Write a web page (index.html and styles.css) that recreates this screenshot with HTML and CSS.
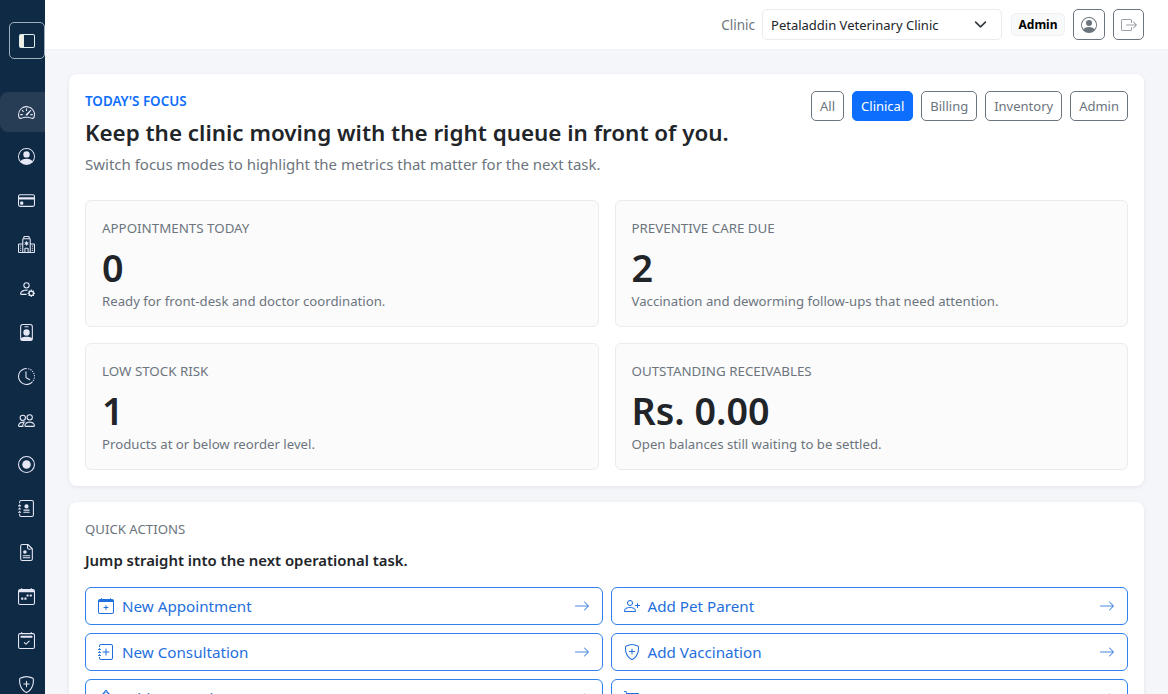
FILE: index.html
```html
<!DOCTYPE html>
<html lang="en">
<head>
<meta charset="utf-8">
<title>Dashboard</title>
<link rel="stylesheet" href="styles.css">
</head>
<body>
<div class="app">
  <aside class="sidebar">
    <button class="toggle"><svg viewBox="0 0 16 16" class="ico"><path d="M0 3a2 2 0 0 1 2-2h12a2 2 0 0 1 2 2v10a2 2 0 0 1-2 2H2a2 2 0 0 1-2-2zm5-1v12h9a1 1 0 0 0 1-1V3a1 1 0 0 0-1-1zM4 2H2a1 1 0 0 0-1 1v10a1 1 0 0 0 1 1h2z" fill-rule="evenodd"/><rect x="1" y="2" width="3" height="12" fill="#f1eee0"/></svg></button>
    <nav class="nav">
      <a class="nav-item active"><svg viewBox="0 0 16 16" class="ico"><path d="M8 4a.5.5 0 0 1 .5.5V6a.5.5 0 0 1-1 0V4.500A.5.5 0 0 1 8 4M3.732 5.732a.5.5 0 0 1 .707 0l.915.914a.5.5 0 1 1-.708.708l-.914-.915a.5.5 0 0 1 0-.707M2 10a.5.5 0 0 1 .5-.5h1.586a.5.5 0 0 1 0 1H2.500A.5.5 0 0 1 2 10m9.500 0a.5.5 0 0 1 .5-.5h1.500a.5.5 0 0 1 0 1H12a.5.5 0 0 1-.5-.5m.754-4.246a.39.39 0 0 0-.527-.02L7.547 9.310a.91.91 0 1 0 1.302 1.258l3.434-4.297a.39.39 0 0 0-.029-.518z"/><path d="M0 10a8 8 0 1 1 15.547 2.661c-.442 1.253-1.845 1.602-2.932 1.250C11.309 13.488 9.475 13 8 13c-1.474 0-3.310.488-4.615.911-1.087.352-2.490.003-2.932-1.250A8 8 0 0 1 0 10m8-7a7 7 0 0 0-6.603 9.329c.203.575.923.876 1.680.630C4.397 12.533 6.358 12 8 12s3.604.532 4.923.96c.757.245 1.477-.056 1.680-.631A7 7 0 0 0 8 3"/></svg></a>
      <a class="nav-item"><svg viewBox="0 0 16 16" class="ico"><path d="M11 6a3 3 0 1 1-6 0 3 3 0 0 1 6 0"/><path fill-rule="evenodd" d="M0 8a8 8 0 1 1 16 0A8 8 0 0 1 0 8m8-7a7 7 0 0 0-5.468 11.370C3.242 11.226 4.805 10 8 10s4.757 1.225 5.468 2.370A7 7 0 0 0 8 1"/></svg></a>
      <a class="nav-item"><svg viewBox="0 0 16 16" class="ico"><path d="M0 4a2 2 0 0 1 2-2h12a2 2 0 0 1 2 2v8a2 2 0 0 1-2 2H2a2 2 0 0 1-2-2zm2-1a1 1 0 0 0-1 1v1h14V4a1 1 0 0 0-1-1zm13 4H1v5a1 1 0 0 0 1 1h12a1 1 0 0 0 1-1z"/><path d="M2 10a1 1 0 0 1 1-1h1a1 1 0 0 1 1 1v1a1 1 0 0 1-1 1H3a1 1 0 0 1-1-1z"/></svg></a>
      <a class="nav-item"><svg viewBox="0 0 16 16" class="ico"><path d="M8.500 5.034v1.100l.953-.55.5.866L9 7l.953.55-.5.866-.953-.55v1.100h-1v-1.100l-.953.55-.5-.866L7 7l-.953-.55.5-.866.953.55v-1.100zM13.250 9a.25.25 0 0 0-.25.25v.5c0 .138.112.25.25.25h.5a.25.25 0 0 0 .25-.25v-.5a.25.25 0 0 0-.25-.25zM13 11.250a.25.25 0 0 1 .25-.25h.5a.25.25 0 0 1 .25.25v.5a.25.25 0 0 1-.25.25h-.5a.25.25 0 0 1-.25-.25zm.25 1.750a.25.25 0 0 0-.25.25v.5c0 .138.112.25.25.25h.5a.25.25 0 0 0 .25-.25v-.5a.25.25 0 0 0-.25-.25zm-11-4a.25.25 0 0 0-.25.25v.5c0 .138.112.25.25.25h.5A.25.25 0 0 0 3 9.750v-.5A.25.25 0 0 0 2.750 9zm0 2a.25.25 0 0 0-.25.25v.5c0 .138.112.25.25.25h.5a.25.25 0 0 0 .25-.25v-.5a.25.25 0 0 0-.25-.25zM2 13.250a.25.25 0 0 1 .25-.25h.5a.25.25 0 0 1 .25.25v.5a.25.25 0 0 1-.25.25h-.5a.25.25 0 0 1-.25-.25z"/><path d="M5 1a1 1 0 0 1 1-1h4a1 1 0 0 1 1 1v1a1 1 0 0 1 1 1v4h3a1 1 0 0 1 1 1v7a1 1 0 0 1-1 1H1a1 1 0 0 1-1-1V8a1 1 0 0 1 1-1h3V3a1 1 0 0 1 1-1zm2 14h2v-3H7zm3 0h1V3H5v12h1v-3a1 1 0 0 1 1-1h2a1 1 0 0 1 1 1zm0-14H6v1h4zm2 7v7h3V8zm-8 7V8H1v7z"/></svg></a>
      <a class="nav-item"><svg viewBox="0 0 16 16" class="ico"><path d="M11 5a3 3 0 1 1-6 0 3 3 0 0 1 6 0M8 7a2 2 0 1 0 0-4 2 2 0 0 0 0 4m.256 7a4.500 4.500 0 0 1-.229-1.004H3c.001-.246.154-.986.832-1.664C4.484 10.680 5.711 10 8 10q.39 0 .74.025c.226-.341.496-.65.804-.918Q8.844 9.002 8 9c-5 0-6 3-6 4s1 1 1 1z"/><path d="M11.886 9.460c.18-.613 1.048-.613 1.229 0l.043.148a.64.64 0 0 0 .921.382l.136-.074c.561-.306 1.175.308.870.869l-.075.136a.64.64 0 0 0 .382.920l.149.045c.612.180.612 1.048 0 1.229l-.150.043a.64.64 0 0 0-.38.921l.074.136c.305.561-.309 1.175-.870.870l-.136-.075a.64.64 0 0 0-.920.382l-.045.149c-.180.612-1.048.612-1.229 0l-.043-.150a.64.64 0 0 0-.921-.38l-.136.074c-.561.305-1.175-.309-.870-.870l.075-.136a.64.64 0 0 0-.382-.920l-.148-.045c-.613-.180-.613-1.048 0-1.229l.148-.043a.64.64 0 0 0 .382-.921l-.074-.136c-.306-.561.308-1.175.869-.870l.136.075a.64.64 0 0 0 .920-.382zM14 12.500a1.500 1.500 0 1 0-3 0 1.500 1.500 0 0 0 3 0"/></svg></a>
      <a class="nav-item"><svg viewBox="0 0 16 16" class="ico"><path d="M6.500 2a.5.5 0 0 0 0 1h3a.5.5 0 0 0 0-1zM11 8a3 3 0 1 1-6 0 3 3 0 0 1 6 0"/><path d="M4.500 0A2.500 2.500 0 0 0 2 2.500V14a2 2 0 0 0 2 2h8a2 2 0 0 0 2-2V2.500A2.500 2.500 0 0 0 11.500 0zM3 2.500A1.500 1.500 0 0 1 4.500 1h7A1.500 1.500 0 0 1 13 2.500v10.795a4.200 4.200 0 0 0-.776-.492C11.392 12.387 10.063 12 8 12s-3.392.387-4.224.803a4.200 4.200 0 0 0-.776.492z"/></svg></a>
      <a class="nav-item"><svg viewBox="0 0 16 16" class="ico"><path d="M8.515 1.019A7 7 0 0 0 8 1V0a8 8 0 0 1 .589.022zm2.004.450a7 7 0 0 0-.985-.299l.219-.976q.576.129 1.126.342zm1.370.710a7 7 0 0 0-.439-.270l.493-.870a8 8 0 0 1 .979.654l-.615.789a7 7 0 0 0-.418-.302zm1.834 1.790a7 7 0 0 0-.653-.796l.724-.690q.406.429.747.910zm.744 1.352a7 7 0 0 0-.214-.468l.893-.450a8 8 0 0 1 .450 1.088l-.950.313a7 7 0 0 0-.179-.483m.530 2.507a7 7 0 0 0-.100-1.025l.985-.170q.1.580.116 1.170zm-.131 1.538q.05-.254.081-.510l.993.123a8 8 0 0 1-.230 1.155l-.964-.267q.069-.247.120-.501m-.952 2.379q.276-.436.486-.908l.914.405q-.24.540-.555 1.038zm-.964 1.205q.183-.183.350-.378l.758.653a8 8 0 0 1-.401.432z"/><path d="M8 1a7 7 0 1 0 4.950 11.950l.707.707A8.001 8.001 0 1 1 8 0z"/><path d="M7.500 3a.5.5 0 0 1 .5.5v5.210l3.248 1.856a.5.5 0 0 1-.496.868l-3.500-2A.5.500 0 0 1 7 9V3.500a.5.500 0 0 1 .5-.5"/></svg></a>
      <a class="nav-item"><svg viewBox="0 0 16 16" class="ico"><path d="M15 14s1 0 1-1-1-4-5-4-5 3-5 4 1 1 1 1zm-7.978-1L7 12.996c.001-.264.167-1.030.76-1.720C8.312 10.629 9.282 10 11 10c1.717 0 2.687.630 3.240 1.276.593.690.758 1.457.760 1.720l-.008.002-.014.002zM11 7a2 2 0 1 0 0-4 2 2 0 0 0 0 4m3-2a3 3 0 1 1-6 0 3 3 0 0 1 6 0M6.936 9.280a6 6 0 0 0-1.230-.247A7 7 0 0 0 5 9c-4 0-5 3-5 4q0 1 1 1h4.216A2.240 2.240 0 0 1 5 13c0-1.010.377-2.042 1.090-2.904.243-.294.526-.569.846-.816M4.920 10A5.500 5.500 0 0 0 4 13H1c0-.260.164-1.030.760-1.724.545-.636 1.492-1.256 3.160-1.275ZM1.500 5.500a3 3 0 1 1 6 0 3 3 0 0 1-6 0m3-2a2 2 0 1 0 0 4 2 2 0 0 0 0-4"/></svg></a>
      <a class="nav-item"><svg viewBox="0 0 16 16" class="ico"><path d="M8 15A7 7 0 1 1 8 1a7 7 0 0 1 0 14m0 1A8 8 0 1 0 8 0a8 8 0 0 0 0 16"/><path d="M8 4a4 4 0 1 0 0 8 4 4 0 0 0 0-8"/></svg></a>
      <a class="nav-item"><svg viewBox="0 0 16 16" class="ico"><path d="M8 8a2 2 0 1 0 0-4 2 2 0 0 0 0 4M5.500 9h5a.5.5 0 0 1 0 1h-5a.5.5 0 0 1 0-1m0 2h5a.5.5 0 0 1 0 1h-5a.5.5 0 0 1 0-1"/><path d="M3 0h10a2 2 0 0 1 2 2v12a2 2 0 0 1-2 2H3a2 2 0 0 1-2-2v-1h1v1a1 1 0 0 0 1 1h10a1 1 0 0 0 1-1V2a1 1 0 0 0-1-1H3a1 1 0 0 0-1 1v1H1V2a2 2 0 0 1 2-2"/><path d="M1 5v-.500a.5.5 0 0 1 1 0V5h.5a.5.5 0 0 1 0 1h-2a.5.5 0 0 1 0-1zm0 3v-.500a.5.5 0 0 1 1 0V8h.5a.5.5 0 0 1 0 1h-2a.5.5 0 0 1 0-1zm0 3v-.500a.5.5 0 0 1 1 0V11h.5a.5.5 0 0 1 0 1h-2a.5.5 0 0 1 0-1z"/></svg></a>
      <a class="nav-item"><svg viewBox="0 0 16 16" class="ico"><path d="M9.293 0H4a2 2 0 0 0-2 2v12a2 2 0 0 0 2 2h8a2 2 0 0 0 2-2V4.707A1 1 0 0 0 13.707 4L10 .293A1 1 0 0 0 9.293 0M9.500 3.500v-2l3 3h-2a1 1 0 0 1-1-1M13 5v9a1 1 0 0 1-1 1H4a1 1 0 0 1-1-1V2a1 1 0 0 1 1-1h4.500v2.500a2 2 0 0 0 2 2z" /><circle cx="6.500" cy="7.500" r="1.700"/><path d="M4.500 10.500h7v1h-7zm0 2h7v1h-7z"/></svg></a>
      <a class="nav-item"><svg viewBox="0 0 16 16" class="ico"><path d="M11 6.500a.5.5 0 0 1 .5-.5h1a.5.5 0 0 1 .5.5v1a.5.5 0 0 1-.5.5h-1a.5.5 0 0 1-.5-.5zm-3 0a.5.5 0 0 1 .5-.5h1a.5.5 0 0 1 .5.5v1a.5.5 0 0 1-.5.5h-1a.5.5 0 0 1-.5-.5zm-5 3a.5.5 0 0 1 .5-.5h1a.5.5 0 0 1 .5.5v1a.5.5 0 0 1-.5.5h-1a.5.5 0 0 1-.5-.5zm3 0a.5.5 0 0 1 .5-.5h1a.5.5 0 0 1 .5.5v1a.5.5 0 0 1-.5.5h-1a.5.5 0 0 1-.5-.5z"/><path d="M3.500 0a.5.5 0 0 1 .5.5V1h8V.5a.5.5 0 0 1 1 0V1h1a2 2 0 0 1 2 2v11a2 2 0 0 1-2 2H2a2 2 0 0 1-2-2V3a2 2 0 0 1 2-2h1V.5a.5.5 0 0 1 .5-.5M1 4v10a1 1 0 0 0 1 1h12a1 1 0 0 0 1-1V4z"/></svg></a>
      <a class="nav-item"><svg viewBox="0 0 16 16" class="ico"><path d="M10.854 8.146a.5.5 0 0 1 0 .708l-3 3a.5.5 0 0 1-.708 0l-1.500-1.500a.5.5 0 0 1 .708-.708L7.500 10.793l2.646-2.647a.5.5 0 0 1 .708 0"/><path d="M3.500 0a.5.5 0 0 1 .5.5V1h8V.5a.5.5 0 0 1 1 0V1h1a2 2 0 0 1 2 2v11a2 2 0 0 1-2 2H2a2 2 0 0 1-2-2V3a2 2 0 0 1 2-2h1V.5a.5.5 0 0 1 .5-.5M2 2a1 1 0 0 0-1 1v11a1 1 0 0 0 1 1h12a1 1 0 0 0 1-1V3a1 1 0 0 0-1-1z"/><path d="M2.500 4a.5.5 0 0 1 .5-.5h10a.5.5 0 0 1 .5.5v1a.5.5 0 0 1-.5.5H3a.5.5 0 0 1-.5-.5z"/></svg></a>
      <a class="nav-item"><svg viewBox="0 0 16 16" class="ico"><path d="M5.338 1.590a61 61 0 0 0-2.837.856.48.48 0 0 0-.328.390c-.554 4.157.726 7.190 2.253 9.188a10.700 10.700 0 0 0 2.287 2.233c.346.244.652.420.893.533q.18.085.293.118a1 1 0 0 0 .101.025 1 1 0 0 0 .1-.025q.114-.034.294-.118c.24-.113.547-.290.893-.533a10.700 10.700 0 0 0 2.287-2.233c1.527-1.997 2.807-5.031 2.253-9.188a.48.48 0 0 0-.328-.390c-.651-.213-1.750-.560-2.837-.855C9.552 1.290 8.531 1.067 8 1.067c-.530 0-1.552.223-2.662.524zM5.072.560C6.157.265 7.310 0 8 0s1.843.265 2.928.560c1.110.300 2.229.655 2.887.870a1.540 1.540 0 0 1 1.044 1.262c.596 4.477-.787 7.795-2.465 9.999a11.800 11.800 0 0 1-2.517 2.453 7 7 0 0 1-1.048.625c-.280.132-.581.240-.829.240s-.548-.108-.829-.240a7 7 0 0 1-1.048-.625 11.800 11.800 0 0 1-2.517-2.453C1.928 10.487.545 7.169 1.141 2.692A1.540 1.540 0 0 1 2.185 1.430 63 63 0 0 1 5.072.560"/><path d="M8 4.500a.5.5 0 0 1 .5.5v2h2a.5.5 0 0 1 0 1h-2v2a.5.5 0 0 1-1 0V8h-2a.5.5 0 0 1 0-1h2V5a.5.5 0 0 1 .5-.5"/></svg></a>
    </nav>
  </aside>
  <div class="main">
    <header class="topbar">
      <span class="clinic-label">Clinic</span>
      <div class="clinic-select"><span>Petaladdin Veterinary Clinic</span><svg viewBox="0 0 16 16" class="chev"><path fill="none" stroke="#343a40" stroke-width="2" stroke-linecap="round" stroke-linejoin="round" d="m2 5 6 6 6-6"/></svg></div>
      <span class="role-badge">Admin</span>
      <button class="icon-btn"><svg viewBox="0 0 16 16" class="ico-16"><path d="M11 6a3 3 0 1 1-6 0 3 3 0 0 1 6 0"/><path fill-rule="evenodd" d="M0 8a8 8 0 1 1 16 0A8 8 0 0 1 0 8m8-7a7 7 0 0 0-5.468 11.370C3.242 11.226 4.805 10 8 10s4.757 1.225 5.468 2.370A7 7 0 0 0 8 1"/></svg></button>
      <button class="icon-btn exit"><svg viewBox="0 0 16 16" class="ico-16"><path fill-rule="evenodd" d="M10 12.500a.5.5 0 0 1-.5.5h-8a.5.5 0 0 1-.5-.5v-9a.5.5 0 0 1 .5-.5h8a.5.5 0 0 1 .5.5v2a.5.5 0 0 0 1 0v-2A1.500 1.500 0 0 0 9.500 2h-8A1.500 1.500 0 0 0 0 3.500v9A1.500 1.500 0 0 0 1.500 14h8a1.500 1.500 0 0 0 1.500-1.500v-2a.5.5 0 0 0-1 0z"/><path fill-rule="evenodd" d="M15.854 8.354a.5.5 0 0 0 0-.708l-3-3a.5.5 0 0 0-.708.708L14.293 7.500H5.500a.5.5 0 0 0 0 1h8.793l-2.147 2.146a.5.5 0 0 0 .708.708z"/></svg></button>
    </header>
    <main class="content">
      <section class="card focus">
        <div class="focus-head">
          <div>
            <div class="eyebrow">TODAY'S FOCUS</div>
            <h1 class="title">Keep the clinic moving with the right queue in front of you.</h1>
            <p class="subtitle">Switch focus modes to highlight the metrics that matter for the next task.</p>
          </div>
          <div class="modes">
            <button class="mode">All</button>
            <button class="mode on">Clinical</button>
            <button class="mode">Billing</button>
            <button class="mode">Inventory</button>
            <button class="mode">Admin</button>
          </div>
        </div>
        <div class="metrics">
          <div class="metric"><div class="metric-label">APPOINTMENTS TODAY</div><div class="metric-value">0</div><div class="metric-note">Ready for front-desk and doctor coordination.</div></div>
          <div class="metric"><div class="metric-label">PREVENTIVE CARE DUE</div><div class="metric-value">2</div><div class="metric-note">Vaccination and deworming follow-ups that need attention.</div></div>
          <div class="metric"><div class="metric-label">LOW STOCK RISK</div><div class="metric-value">1</div><div class="metric-note">Products at or below reorder level.</div></div>
          <div class="metric"><div class="metric-label">OUTSTANDING RECEIVABLES</div><div class="metric-value">Rs. 0.00</div><div class="metric-note">Open balances still waiting to be settled.</div></div>
        </div>
      </section>
      <section class="card actions">
        <div class="actions-label">QUICK ACTIONS</div>
        <div class="actions-title">Jump straight into the next operational task.</div>
        <div class="action-grid">
          <a class="action"><svg viewBox="0 0 16 16" class="ico-16"><path d="M8 7a.5.5 0 0 1 .5.5V9H10a.5.5 0 0 1 0 1H8.500v1.500a.5.5 0 0 1-1 0V10H6a.5.5 0 0 1 0-1h1.500V7.500A.5.5 0 0 1 8 7"/><path d="M3.500 0a.5.5 0 0 1 .5.5V1h8V.5a.5.5 0 0 1 1 0V1h1a2 2 0 0 1 2 2v11a2 2 0 0 1-2 2H2a2 2 0 0 1-2-2V3a2 2 0 0 1 2-2h1V.5a.5.5 0 0 1 .5-.5M1 4v10a1 1 0 0 0 1 1h12a1 1 0 0 0 1-1V4z"/><path d="M1 2h14v2H1z"/></svg><span class="action-text">New Appointment</span><svg viewBox="0 0 16 16" class="ico-16 arrow"><path fill-rule="evenodd" d="M1 8a.5.5 0 0 1 .5-.5h11.793l-3.147-3.146a.5.5 0 0 1 .708-.708l4 4a.5.5 0 0 1 0 .708l-4 4a.5.5 0 0 1-.708-.708L13.293 8.500H1.500A.5.5 0 0 1 1 8"/></svg></a>
          <a class="action"><svg viewBox="0 0 16 16" class="ico-16"><path d="M6 8c1.657 0 3-1.343 3-3S7.657 2 6 2 3 3.343 3 5s1.343 3 3 3m0-5a2 2 0 1 1 0 4 2 2 0 0 1 0-4M0 13c0-1 1-4 6-4s6 3 6 4-1 1-1 1H1s-1 0-1-1m1 0h10c0-.246-.154-.986-.832-1.664C9.516 10.680 8.289 10 6 10s-3.516.680-4.168 1.332C1.154 12.014 1 12.754 1 13"/><path d="M13.500 5a.5.5 0 0 1 .5.5V7h1.500a.5.5 0 0 1 0 1H14v1.500a.5.5 0 0 1-1 0V8h-1.500a.5.5 0 0 1 0-1H13V5.500a.5.5 0 0 1 .5-.5"/></svg><span class="action-text">Add Pet Parent</span><svg viewBox="0 0 16 16" class="ico-16 arrow"><path fill-rule="evenodd" d="M1 8a.5.5 0 0 1 .5-.5h11.793l-3.147-3.146a.5.5 0 0 1 .708-.708l4 4a.5.5 0 0 1 0 .708l-4 4a.5.5 0 0 1-.708-.708L13.293 8.500H1.500A.5.5 0 0 1 1 8"/></svg></a>
          <a class="action"><svg viewBox="0 0 16 16" class="ico-16"><path d="M8 4.500a.5.5 0 0 1 .5.5v2.500H11a.5.5 0 0 1 0 1H8.500V11a.5.5 0 0 1-1 0V8.500H5a.5.5 0 0 1 0-1h2.500V5a.5.5 0 0 1 .5-.5"/><path d="M3 0h10a2 2 0 0 1 2 2v12a2 2 0 0 1-2 2H3a2 2 0 0 1-2-2v-1h1v1a1 1 0 0 0 1 1h10a1 1 0 0 0 1-1V2a1 1 0 0 0-1-1H3a1 1 0 0 0-1 1v1H1V2a2 2 0 0 1 2-2"/><path d="M1 5v-.500a.5.5 0 0 1 1 0V5h.5a.5.5 0 0 1 0 1h-2a.5.5 0 0 1 0-1zm0 3v-.500a.5.5 0 0 1 1 0V8h.5a.5.5 0 0 1 0 1h-2a.5.5 0 0 1 0-1zm0 3v-.500a.5.5 0 0 1 1 0V11h.5a.5.5 0 0 1 0 1h-2a.5.5 0 0 1 0-1z"/></svg><span class="action-text">New Consultation</span><svg viewBox="0 0 16 16" class="ico-16 arrow"><path fill-rule="evenodd" d="M1 8a.5.5 0 0 1 .5-.5h11.793l-3.147-3.146a.5.5 0 0 1 .708-.708l4 4a.5.5 0 0 1 0 .708l-4 4a.5.5 0 0 1-.708-.708L13.293 8.500H1.500A.5.5 0 0 1 1 8"/></svg></a>
          <a class="action"><svg viewBox="0 0 16 16" class="ico-16"><path d="M5.338 1.590a61 61 0 0 0-2.837.856.48.48 0 0 0-.328.390c-.554 4.157.726 7.190 2.253 9.188a10.700 10.700 0 0 0 2.287 2.233c.346.244.652.420.893.533q.18.085.293.118a1 1 0 0 0 .101.025 1 1 0 0 0 .1-.025q.114-.034.294-.118c.24-.113.547-.290.893-.533a10.700 10.700 0 0 0 2.287-2.233c1.527-1.997 2.807-5.031 2.253-9.188a.48.48 0 0 0-.328-.390c-.651-.213-1.750-.560-2.837-.855C9.552 1.290 8.531 1.067 8 1.067c-.530 0-1.552.223-2.662.524zM5.072.560C6.157.265 7.310 0 8 0s1.843.265 2.928.560c1.110.300 2.229.655 2.887.870a1.540 1.540 0 0 1 1.044 1.262c.596 4.477-.787 7.795-2.465 9.999a11.800 11.800 0 0 1-2.517 2.453 7 7 0 0 1-1.048.625c-.280.132-.581.240-.829.240s-.548-.108-.829-.240a7 7 0 0 1-1.048-.625 11.800 11.800 0 0 1-2.517-2.453C1.928 10.487.545 7.169 1.141 2.692A1.540 1.540 0 0 1 2.185 1.430 63 63 0 0 1 5.072.560"/><path d="M8 4.500a.5.5 0 0 1 .5.5v2h2a.5.5 0 0 1 0 1h-2v2a.5.5 0 0 1-1 0V8h-2a.5.5 0 0 1 0-1h2V5a.5.5 0 0 1 .5-.5"/></svg><span class="action-text">Add Vaccination</span><svg viewBox="0 0 16 16" class="ico-16 arrow"><path fill-rule="evenodd" d="M1 8a.5.5 0 0 1 .5-.5h11.793l-3.147-3.146a.5.5 0 0 1 .708-.708l4 4a.5.5 0 0 1 0 .708l-4 4a.5.5 0 0 1-.708-.708L13.293 8.500H1.500A.5.5 0 0 1 1 8"/></svg></a>
          <a class="action"><svg viewBox="0 0 16 16" class="ico-16"><path d="M8 0c-.7 0-1.300.5-1.400 1.200L2 6.500V15a1 1 0 0 0 1 1h10a1 1 0 0 0 1-1V6.500L9.400 1.200C9.300.5 8.700 0 8 0m0 1a.5.5 0 1 1 0 1 .5.500 0 0 1 0-1M3 7l5-5 5 5v8H3z"/></svg><span class="action-text">Add Forward</span><svg viewBox="0 0 16 16" class="ico-16 arrow"><path fill-rule="evenodd" d="M1 8a.5.5 0 0 1 .5-.5h11.793l-3.147-3.146a.5.5 0 0 1 .708-.708l4 4a.5.5 0 0 1 0 .708l-4 4a.5.5 0 0 1-.708-.708L13.293 8.500H1.500A.5.5 0 0 1 1 8"/></svg></a>
          <a class="action"><svg viewBox="0 0 16 16" class="ico-16"><path d="M0 1.500A.5.5 0 0 1 .5 1H2a.5.5 0 0 1 .485.379L2.890 3H14.500a.5.5 0 0 1 .491.592l-1.500 8A.5.5 0 0 1 13 12H4a.5.5 0 0 1-.491-.408L2.010 3.607 1.610 2H.5a.5.5 0 0 1-.5-.500M3.102 4l1.313 7h8.170l1.313-7z"/></svg><span class="action-text">Open POS</span><svg viewBox="0 0 16 16" class="ico-16 arrow"><path fill-rule="evenodd" d="M1 8a.5.5 0 0 1 .5-.5h11.793l-3.147-3.146a.5.5 0 0 1 .708-.708l4 4a.5.5 0 0 1 0 .708l-4 4a.5.5 0 0 1-.708-.708L13.293 8.500H1.500A.5.5 0 0 1 1 8"/></svg></a>
        </div>
      </section>
    </main>
  </div>
</div>
</body>
</html>
```
FILE: styles.css
```css
* { box-sizing: border-box; }
html, body { margin: 0; height: 100%; overflow: hidden; }
body { font-family: "Noto Sans", "Open Sans", sans-serif; color: #212529; background: #f4f6fa; }
svg { fill: currentColor; display: block; }
.app { display: flex; height: 694px; overflow: hidden; }
.sidebar { width: 45px; flex: none; background: #0f2a45; color: #e6e8f5; display: flex; flex-direction: column; overflow: hidden; }
.ico { width: 17px; height: 17px; }
.ico-16 { width: 16px; height: 16px; flex: none; }
.toggle { margin: 22px 0 0 9px; width: 36px; height: 37px; background: #0f2a45; border: 1px solid #9fb0bd; border-radius: 5px; color: #dfeeee; display: flex; align-items: center; justify-content: center; padding: 0; flex: none; }
.toggle .ico { width: 16px; height: 16px; }
.nav { margin-top: 33px; display: flex; flex-direction: column; gap: 4px; }
.nav-item { height: 40px; display: flex; align-items: center; justify-content: center; padding-left: 7px; flex: none; }
.nav-item.active { background: #273d56; border-radius: 8px 0 0 8px; }
.main { flex: 1; min-width: 0; display: flex; flex-direction: column; overflow: hidden; }
.topbar { height: 50px; flex: none; background: #fff; border-bottom: 1px solid #eff1f4; display: flex; align-items: center; justify-content: flex-end; padding: 0 24px 0 0; gap: 8px; }
.clinic-label { font-size: 13.500px; color: #6c757d; margin-right: -1px; }
.clinic-select { width: 240px; height: 31px; border: 1px solid #e9ecef; border-radius: 5px; display: flex; align-items: center; justify-content: space-between; padding: 0 14px 0 8px; font-size: 13px; color: #212529; margin-right: 1px; }
.chev { width: 13px; height: 13px; }
.role-badge { padding: 3px 6.500px; background: #f8f9fa; border: 1px solid #eef0f2; border-radius: 5px; font-size: 12px; font-weight: 700; color: #000; line-height: 15px; }
.icon-btn { width: 32px; height: 31px; border: 1px solid #6c757d; border-radius: 5px; background: #fff; color: #6c757d; display: flex; align-items: center; justify-content: center; padding: 0; }
.icon-btn.exit { width: 31px; color: #9aa1a8; }
.content { flex: 1; min-height: 0; padding: 24px 24px 0; display: flex; flex-direction: column; gap: 16px; }
.card { background: #fff; border-radius: 8px; box-shadow: 0 1px 4px rgba(20, 30, 60, .08); padding: 16px; flex: none; }
.focus-head { display: flex; justify-content: space-between; align-items: flex-start; }
.eyebrow { font-size: 13.400px; font-weight: 600; color: #0d6efd; line-height: 20px; margin-top: 1px; }
.title { margin: 8px 0 0; font-size: 22.400px; font-weight: 600; line-height: 28px; color: #212529; }
.subtitle { margin: 6px 0 0; font-size: 15px; line-height: 22px; color: #6c757d; }
.modes { display: flex; gap: 8px; margin-top: 1px; }
.mode { height: 30px; padding: 0 8px; border: 1px solid #6c757d; border-radius: 5px; background: #fff; color: #6c757d; font: 13px "Noto Sans", sans-serif; }
.mode.on { background: #0d6efd; border-color: #0d6efd; color: #fff; }
.metrics { display: grid; grid-template-columns: 1fr 1fr; gap: 16px; margin-top: 25px; }
.metric { height: 127px; background: #fbfbfc; border: 1px solid #e9ecef; border-radius: 6px; padding: 17px 16px 0; }
.metric-label { font-size: 13.350px; color: #6c757d; line-height: 20px; }
.metric-value { font-size: 37.700px; font-weight: 600; line-height: 44px; margin-top: 8px; color: #212529; }
.metric-note { font-size: 13.200px; color: #6c757d; line-height: 20px; margin-top: 1px; }
.actions-label { font-size: 13.200px; color: #6c757d; line-height: 20px; margin-top: 1px; }
.actions-title { font-size: 14.900px; font-weight: 600; line-height: 22px; margin-top: 10px; color: #212529; }
.action-grid { display: grid; grid-template-columns: 1fr 1fr; gap: 8px; margin-top: 16px; }
.action { height: 38px; border: 1px solid #2f80ed; border-radius: 6px; color: #1f6fdc; display: flex; align-items: center; gap: 8px; padding: 0 12px; }
.action-text { flex: 1; font-size: 15.200px; }
.arrow { opacity: .8; }
```
